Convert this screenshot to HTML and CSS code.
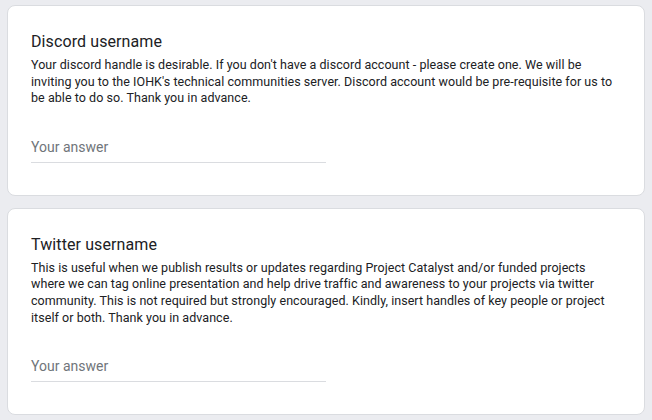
FILE: index.html
```html
<!DOCTYPE html>
<html>
<head>
<meta charset="utf-8">
<link rel="stylesheet" href="styles.css">
</head>
<body>
<div class="page">
  <div class="card">
    <div class="title">Discord username</div>
    <div class="desc">Your discord handle is desirable. If you don't have a discord account - please create one. We will be inviting you to the IOHK's technical communities server. Discord account would be pre-requisite for us to be able to do so. Thank you in advance.</div>
    <div class="answer"><span class="placeholder">Your answer</span></div>
  </div>
  <div class="card">
    <div class="title">Twitter username</div>
    <div class="desc">This is useful when we publish results or updates regarding Project Catalyst and/or funded projects where we can tag online presentation and help drive traffic and awareness to your projects via twitter community. This is not required but strongly encouraged. Kindly, insert handles of key people or project itself or both. Thank you in advance.</div>
    <div class="answer"><span class="placeholder">Your answer</span></div>
  </div>
</div>
</body>
</html>
```
FILE: styles.css
```css
html, body {
  margin: 0;
  padding: 0;
  background: #ebecf0;
}
.page {
  padding: 5px 7px 0 7px;
  display: flex;
  flex-direction: column;
  gap: 12px;
}
.card {
  background: #fff;
  border: 1px solid #dadce0;
  border-radius: 8px;
  padding: 24px 23px 32px 23px;
  font-family: Roboto, "Liberation Sans", sans-serif;
  color: #202124;
}
.title {
  font-size: 16px;
  line-height: 24px;
  letter-spacing: 0.1px;
}
.desc {
  margin-top: 3px;
  font-size: 12.5px;
  line-height: 16.6px;
  letter-spacing: 0.05px;
}
.answer {
  margin-top: 30px;
  width: 50%;
  border-bottom: 1px solid #dadce0;
  padding-bottom: 5px;
  line-height: 20px;
}
.placeholder {
  font-size: 14px;
  color: #70757a;
}
```
